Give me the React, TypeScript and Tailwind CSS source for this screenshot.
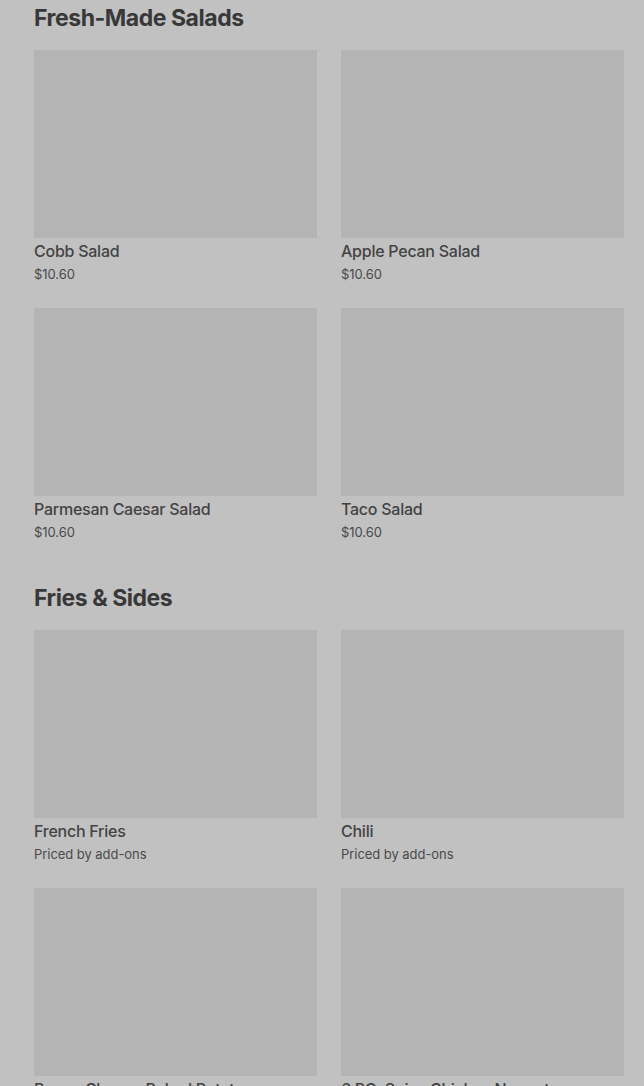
import React from "react";

type Item = { name: string; price: string };

const sections: { title: string; items: Item[] }[] = [
  {
    title: "Fresh-Made Salads",
    items: [
      { name: "Cobb Salad", price: "$10.60" },
      { name: "Apple Pecan Salad", price: "$10.60" },
      { name: "Parmesan Caesar Salad", price: "$10.60" },
      { name: "Taco Salad", price: "$10.60" },
    ],
  },
  {
    title: "Fries & Sides",
    items: [
      { name: "French Fries", price: "Priced by add-ons" },
      { name: "Chili", price: "Priced by add-ons" },
      { name: "Bacon Cheese Baked Potato", price: "$5.49" },
      { name: "6 PC. Spicy Chicken Nuggets", price: "$3.29" },
    ],
  },
];

function Card({ item }: { item: Item }) {
  return (
    <div className="flex flex-col">
      <div className="h-[188px] w-full bg-[#b4b4b4]" />
      <div className="mt-px text-[16px] leading-6 font-medium text-[#434343] tracking-[-0.25px]">
        {item.name}
      </div>
      <div className="mt-px text-[13px] leading-5 text-[#4a4a4a] tracking-[-0.05px]">
        {item.price}
      </div>
    </div>
  );
}

export default function App() {
  return (
    <div
      className="min-h-[1086px] w-[644px] bg-[#c1c1c1] pl-[34px] pr-[20px] pt-px overflow-hidden"
      style={{ fontFamily: "Inter, 'Noto Sans', sans-serif" }}
    >
      {sections.map((s, i) => (
        <section key={s.title} className={i > 0 ? "mt-[39px]" : ""}>
          <h2 className="pt-px text-[23px] leading-8 font-bold tracking-[-0.45px] text-[#383838]">
            {s.title}
          </h2>
          <div className="mt-[16px] grid grid-cols-2 gap-6">
            {s.items.map((it) => (
              <Card key={it.name} item={it} />
            ))}
          </div>
        </section>
      ))}
    </div>
  );
}
